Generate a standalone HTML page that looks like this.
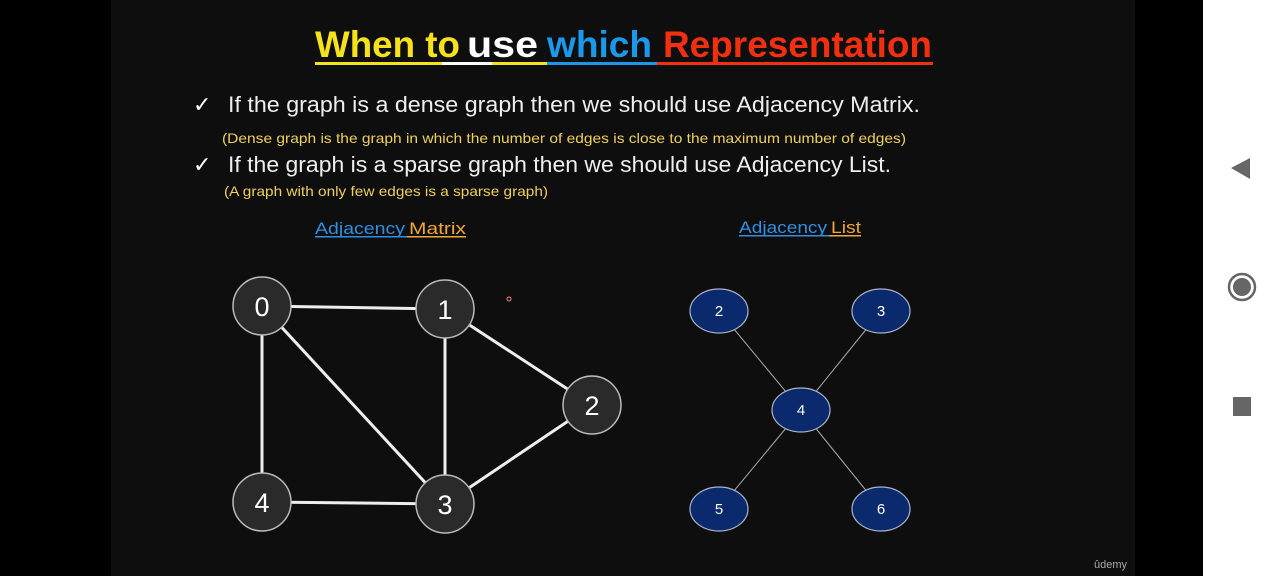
<!DOCTYPE html>
<html><head><meta charset="utf-8"><style>
html,body{margin:0;padding:0;background:#000;width:1280px;height:576px;overflow:hidden}
svg{display:block}
text{font-family:"Liberation Sans",sans-serif}
</style></head><body>
<svg width="1280" height="576" viewBox="0 0 1280 576">
<rect width="1280" height="576" fill="#000"/>
<rect x="111" y="0" width="1024" height="576" fill="#0e0e0e"/>
<rect x="1203" y="0" width="77" height="576" fill="#fff"/>
<!-- nav icons -->
<polygon points="1231,168 1250,158 1250,179" fill="#666"/>
<circle cx="1242" cy="287" r="13" fill="none" stroke="#666" stroke-width="2.5"/>
<circle cx="1242" cy="287" r="9" fill="#666"/>
<rect x="1233" y="397" width="18" height="19" fill="#666"/>
<!-- title -->
<g font-weight="bold" font-size="37">
<text x="315" y="57" fill="#f5e21a" textLength="145" lengthAdjust="spacingAndGlyphs">When to</text>
<text x="467" y="57" fill="#fff" textLength="71" lengthAdjust="spacingAndGlyphs">use</text>
<text x="547" y="57" fill="#1a98ea" textLength="105" lengthAdjust="spacingAndGlyphs">which</text>
<text x="663" y="57" fill="#f2300f" textLength="269" lengthAdjust="spacingAndGlyphs">Representation</text>
</g>
<rect x="315" y="62" width="127" height="3" fill="#f5e21a"/>
<rect x="442" y="62" width="50" height="3" fill="#fff"/>
<rect x="492" y="62" width="55" height="3" fill="#f5e21a"/>
<rect x="547" y="62" width="110" height="3" fill="#1a98ea"/>
<rect x="657" y="62" width="276" height="3" fill="#f2300f"/>
<!-- bullets -->
<text x="193" y="112" fill="#fff" font-size="22">✓</text>
<text x="228" y="112" fill="#eee" font-size="22" textLength="692" lengthAdjust="spacingAndGlyphs">If the graph is a dense graph then we should use Adjacency Matrix.</text>
<text x="222" y="143" fill="#f0d05a" font-size="14" textLength="684" lengthAdjust="spacingAndGlyphs">(Dense graph is the graph in which the number of edges is close to the maximum number of edges)</text>
<text x="193" y="172" fill="#fff" font-size="22">✓</text>
<text x="228" y="172" fill="#eee" font-size="22" textLength="663" lengthAdjust="spacingAndGlyphs">If the graph is a sparse graph then we should use Adjacency List.</text>
<text x="224" y="196" fill="#f0d05a" font-size="14" textLength="324" lengthAdjust="spacingAndGlyphs">(A graph with only few edges is a sparse graph)</text>
<!-- subheadings -->
<text x="315" y="234" fill="#2f8fe0" font-size="17" textLength="90" lengthAdjust="spacingAndGlyphs">Adjacency</text>
<text x="409" y="234" fill="#f0a830" font-size="17" textLength="57" lengthAdjust="spacingAndGlyphs">Matrix</text>
<rect x="315" y="236" width="92" height="1.5" fill="#2f8fe0"/><rect x="407" y="236" width="59" height="1.5" fill="#f0a830"/>
<text x="739" y="233" fill="#2f8fe0" font-size="17" textLength="88" lengthAdjust="spacingAndGlyphs">Adjacency</text>
<text x="831" y="233" fill="#f0a830" font-size="17" textLength="30" lengthAdjust="spacingAndGlyphs">List</text>
<rect x="739" y="235" width="90" height="1.5" fill="#2f8fe0"/><rect x="829" y="235" width="32" height="1.5" fill="#f0a830"/>
<!-- left graph -->
<g stroke="#eee" stroke-width="3">
<line x1="262" y1="306" x2="445" y2="309"/>
<line x1="262" y1="306" x2="262" y2="502"/>
<line x1="262" y1="306" x2="445" y2="504"/>
<line x1="445" y1="309" x2="445" y2="504"/>
<line x1="445" y1="309" x2="592" y2="405"/>
<line x1="592" y1="405" x2="445" y2="504"/>
<line x1="262" y1="502" x2="445" y2="504"/>
</g>
<g fill="#2a2a2a" stroke="#bbb" stroke-width="1.5">
<circle cx="262" cy="306" r="29"/><circle cx="445" cy="309" r="29"/><circle cx="592" cy="405" r="29"/><circle cx="445" cy="504" r="29"/><circle cx="262" cy="502" r="29"/>
</g>
<g fill="#fff" font-size="27" text-anchor="middle">
<text x="262" y="316">0</text><text x="445" y="319">1</text><text x="592" y="415">2</text><text x="445" y="514">3</text><text x="262" y="512">4</text>
</g>
<circle cx="509" cy="299" r="2" fill="none" stroke="#e88" stroke-width="1"/>
<!-- right graph -->
<g stroke="#aaa" stroke-width="1">
<line x1="719" y1="311" x2="801" y2="410"/><line x1="881" y1="311" x2="801" y2="410"/>
<line x1="719" y1="509" x2="801" y2="410"/><line x1="881" y1="509" x2="801" y2="410"/>
</g>
<g fill="#0b2a6e" stroke="#8ca" stroke-opacity=".0"></g>
<g fill="#0b2a6e" stroke="#aab4c8" stroke-width="1.2">
<ellipse cx="719" cy="311" rx="29" ry="22"/><ellipse cx="881" cy="311" rx="29" ry="22"/><ellipse cx="801" cy="410" rx="29" ry="22"/><ellipse cx="719" cy="509" rx="29" ry="22"/><ellipse cx="881" cy="509" rx="29" ry="22"/>
</g>
<g fill="#fff" font-size="15" text-anchor="middle">
<text x="719" y="316">2</text><text x="881" y="316">3</text><text x="801" y="415">4</text><text x="719" y="514">5</text><text x="881" y="514">6</text>
</g>
<text x="1094" y="568" fill="#aaa" font-size="11">ûdemy</text>
</svg>
</body></html>
